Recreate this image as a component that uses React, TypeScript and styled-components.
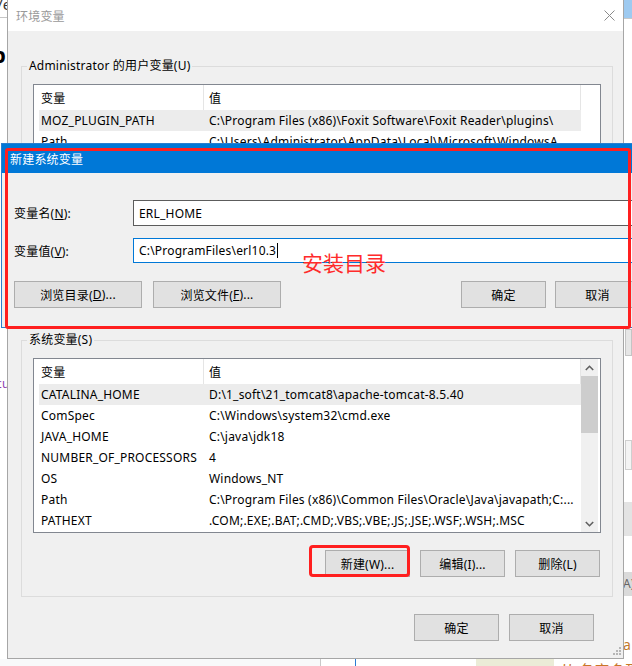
import React from "react";
import styled, { createGlobalStyle } from "styled-components";

const GlobalStyle = createGlobalStyle`
  html, body { margin: 0; padding: 0; background: #f8f9fa; }
  body {
    font-family: "Noto Sans", "Noto Sans CJK SC", sans-serif;
    font-size: 12px;
    letter-spacing: 0.2px;
    color: #000;
    overflow: hidden;
  }
  * { box-sizing: border-box; }
`;

const Desktop = styled.div`
  position: relative;
  width: 632px;
  height: 666px;
  overflow: hidden;
  background: #f8f9fa;
`;

/* ---------- background windows ---------- */
const LeftBack = styled.div`
  position: absolute;
  left: 0;
  top: 0;
  width: 8px;
  height: 666px;
  background: #fff;
  display: flex;
  flex-direction: column;
  overflow: hidden;
`;

const BackText = styled.div<{ $color: string; $size: number; $top: number; $left: number; $bold?: boolean }>`
  margin-top: ${(p) => p.$top}px;
  margin-left: ${(p) => p.$left}px;
  color: ${(p) => p.$color};
  font-size: ${(p) => p.$size}px;
  font-weight: ${(p) => (p.$bold ? 700 : 400)};
  line-height: ${(p) => p.$size + 2}px;
  white-space: nowrap;
`;

const BackRule = styled.div<{ $top: number; $color: string }>`
  margin-top: ${(p) => p.$top}px;
  height: 1px;
  background: ${(p) => p.$color};
  flex-shrink: 0;
`;

const RightBack = styled.div`
  position: absolute;
  left: 623px;
  top: 0;
  width: 9px;
  height: 666px;
  background: #fff;
  display: flex;
  flex-direction: column;
  overflow: hidden;
`;

const BackBlock = styled.div<{ $top: number; $h: number; $bg: string; $border?: string; $left?: number }>`
  margin-top: ${(p) => p.$top}px;
  margin-left: ${(p) => p.$left ?? 0}px;
  height: ${(p) => p.$h}px;
  background: ${(p) => p.$bg};
  border: ${(p) => p.$border ?? "none"};
  flex-shrink: 0;
  color: #666;
  font-size: 12px;
  line-height: ${(p) => p.$h}px;
  white-space: nowrap;
  overflow: hidden;
`;

const BackLetter = styled.span`
  color: #c47a2a;
  font-size: 14px;
`;

const BottomBack = styled.div`
  position: absolute;
  left: 0;
  top: 659px;
  width: 632px;
  height: 7px;
  display: flex;
  overflow: hidden;
`;

const BottomSeg = styled.div<{ $w: number; $bg: string }>`
  width: ${(p) => p.$w}px;
  background: ${(p) => p.$bg};
  flex-shrink: 0;
  overflow: hidden;
`;

const BottomGlyphs = styled.div`
  flex: 1;
  background: #fff;
  color: #c9772a;
  font-size: 15px;
  line-height: 15px;
  padding: 4px 0 0 6px;
  white-space: nowrap;
  overflow: hidden;
`;

/* ---------- main window ---------- */
const MainWindow = styled.div`
  position: absolute;
  left: 7px;
  top: 0;
  width: 617px;
  height: 659px;
  border: 1px solid #a6a6a6;
  border-top: none;
  background: #f0f0f0;
  display: flex;
  flex-direction: column;
`;

const MainTitleBar = styled.div`
  height: 31px;
  flex-shrink: 0;
  background: #fff;
  display: flex;
  align-items: center;
  justify-content: space-between;
  padding: 0 8px 0 8px;
`;

const InactiveTitle = styled.span`
  color: #999;
  font-size: 12px;
`;

const MainBody = styled.div`
  flex: 1;
  display: flex;
  flex-direction: column;
  padding: 25px 10px 0 13px;
`;

const Group = styled.fieldset<{ $gap?: number }>`
  margin: ${(p) => p.$gap ?? 0}px 0 0 0;
  padding: 8px 11px 19px 11px;
  border: 1px solid #dcdcdc;
  min-width: 0;
  display: flex;
  flex-direction: column;
`;

const GroupLabel = styled.legend`
  margin-left: -6px;
  padding: 0 2px;
  line-height: 20px;
  font-size: 12px;
`;

const ButtonRow = styled.div<{ $gap: number; $top: number; $right: number }>`
  display: flex;
  justify-content: flex-end;
  gap: ${(p) => p.$gap}px;
  margin-top: ${(p) => p.$top}px;
  padding-right: ${(p) => p.$right}px;
`;

const WinButton = styled.div<{ $w: number }>`
  width: ${(p) => p.$w}px;
  height: 27px;
  flex-shrink: 0;
  border: 1px solid #adadad;
  background: #e1e1e1;
  display: flex;
  align-items: center;
  justify-content: center;
  font-size: 12px;
  white-space: nowrap;
`;

const Grip = styled.svg`
  position: absolute;
  right: 2px;
  bottom: 3px;
`;

/* ---------- list view ---------- */
const ListFrame = styled.div<{ $h: number }>`
  height: ${(p) => p.$h}px;
  flex-shrink: 0;
  border: 1px solid #828790;
  background: #fff;
  display: flex;
  padding: 0 1px 0 5px;
  overflow: hidden;
`;

const ListTable = styled.div`
  width: 542px;
  flex-shrink: 0;
  display: flex;
  flex-direction: column;
`;

const HeaderRow = styled.div`
  height: 25px;
  display: flex;
  flex-shrink: 0;
`;

const Cell = styled.div<{ $w: number; $pad: number; $sep?: boolean }>`
  width: ${(p) => p.$w}px;
  flex-shrink: 0;
  padding-left: ${(p) => p.$pad}px;
  border-right: ${(p) => (p.$sep ? "1px solid #e5e5e5" : "none")};
  white-space: nowrap;
  overflow: hidden;
  display: flex;
  align-items: center;
`;

const DataRow = styled.div<{ $selected?: boolean }>`
  height: 21px;
  display: flex;
  flex-shrink: 0;
  background: ${(p) => (p.$selected ? "#ececec" : "transparent")};
`;

const DataCell = styled.div<{ $w: number; $pad: number }>`
  width: ${(p) => p.$w}px;
  flex-shrink: 0;
  padding-left: ${(p) => p.$pad}px;
  line-height: 21px;
  white-space: nowrap;
  overflow: hidden;
`;

const ScrollBar = styled.div`
  width: 17px;
  flex-shrink: 0;
  background: #f0f0f0;
  display: flex;
  flex-direction: column;
`;

const ScrollArrow = styled.div`
  height: 17px;
  flex-shrink: 0;
  display: flex;
  align-items: center;
  justify-content: center;
`;

const ScrollThumb = styled.div`
  height: 57px;
  flex-shrink: 0;
  background: #cdcdcd;
`;

const ScrollTrack = styled.div`
  flex: 1;
`;

/* ---------- new variable dialog ---------- */
const NewVarDialog = styled.div`
  position: absolute;
  left: 1px;
  top: 143px;
  width: 653px;
  height: 185px;
  border: 1px solid #2b7fcf;
  background: #f0f0f0;
  display: flex;
  flex-direction: column;
`;

const ActiveTitleBar = styled.div`
  height: 29px;
  flex-shrink: 0;
  background: #0078d7;
  color: #fff;
  display: flex;
  align-items: center;
  padding-left: 8px;
  font-size: 12px;
`;

const DialogBody = styled.div`
  flex: 1;
  display: flex;
  flex-direction: column;
  padding: 27px 13px 0 12px;
`;

const FormRow = styled.div<{ $top: number }>`
  display: flex;
  align-items: center;
  margin-top: ${(p) => p.$top}px;
`;

const FieldLabel = styled.div`
  width: 119px;
  flex-shrink: 0;
  font-size: 12px;
`;

const TextBox = styled.div<{ $focused?: boolean; $h: number }>`
  flex: 1;
  height: ${(p) => p.$h}px;
  border: 1px solid ${(p) => (p.$focused ? "#0078d7" : "#5c5c5c")};
  background: #fff;
  display: flex;
  align-items: center;
  padding-left: 5px;
  font-size: 12px;
  white-space: nowrap;
`;

const Caret = styled.span`
  display: inline-block;
  width: 1px;
  height: 15px;
  background: #000;
  margin-left: 1px;
`;

const DialogButtons = styled.div`
  display: flex;
  align-items: center;
  margin-top: 18px;
  gap: 11px;
`;

const Spacer = styled.div`
  flex: 1;
`;

const RightPair = styled.div`
  display: flex;
  gap: 9px;
`;

/* ---------- annotations ---------- */
const RedFrame = styled.div<{ $x: number; $y: number; $w: number; $h: number; $t: number; $r: number }>`
  position: absolute;
  left: ${(p) => p.$x}px;
  top: ${(p) => p.$y}px;
  width: ${(p) => p.$w}px;
  height: ${(p) => p.$h}px;
  border: ${(p) => p.$t}px solid #ff1f1f;
  border-radius: ${(p) => p.$r}px;
  pointer-events: none;
`;

const RedNote = styled.div`
  position: absolute;
  left: 302px;
  top: 248px;
  color: #ff2b2b;
  font-family: "Noto Sans CJK SC", sans-serif;
  font-size: 21px;
  letter-spacing: 0;
  line-height: 28px;
  white-space: nowrap;
`;

/* ---------- icons ---------- */
const CloseIcon = () => (
  <svg width="11" height="11" viewBox="0 0 11 11">
    <path d="M0.5 0.5 L10.5 10.5 M10.5 0.5 L0.5 10.5" stroke="#8a8a8a" strokeWidth="1" fill="none" />
  </svg>
);

const Chevron = ({ up }: { up: boolean }) => (
  <svg width="9" height="6" viewBox="0 0 9 6">
    <polyline
      points={up ? "0.8,5 4.5,1.3 8.2,5" : "0.8,1 4.5,4.7 8.2,1"}
      stroke="#606060"
      strokeWidth="1.6"
      fill="none"
    />
  </svg>
);

/* ---------- data ---------- */
type Row = [string, string];

const userRows: Row[] = [
  ["MOZ_PLUGIN_PATH", "C:\\Program Files (x86)\\Foxit Software\\Foxit Reader\\plugins\\"],
  ["Path", "C:\\Users\\Administrator\\AppData\\Local\\Microsoft\\WindowsA..."],
  ["TEMP", "%USERPROFILE%\\AppData\\Local\\Temp"],
  ["TMP", "%USERPROFILE%\\AppData\\Local\\Temp"],
];

const systemRows: Row[] = [
  ["CATALINA_HOME", "D:\\1_soft\\21_tomcat8\\apache-tomcat-8.5.40"],
  ["ComSpec", "C:\\Windows\\system32\\cmd.exe"],
  ["JAVA_HOME", "C:\\java\\jdk18"],
  ["NUMBER_OF_PROCESSORS", "4"],
  ["OS", "Windows_NT"],
  ["Path", "C:\\Program Files (x86)\\Common Files\\Oracle\\Java\\javapath;C:..."],
  ["PATHEXT", ".COM;.EXE;.BAT;.CMD;.VBS;.VBE;.JS;.JSE;.WSF;.WSH;.MSC"],
];

const ListView = ({ rows, height, scroll }: { rows: Row[]; height: number; scroll: boolean }) => (
  <ListFrame $h={height}>
    <ListTable>
      <HeaderRow>
        <Cell $w={165} $pad={2} $sep>
          变量
        </Cell>
        <Cell $w={377} $pad={5} $sep>
          值
        </Cell>
      </HeaderRow>
      {rows.map((r, i) => (
        <DataRow key={r[0]} $selected={i === 0}>
          <DataCell $w={165} $pad={2}>
            {r[0]}
          </DataCell>
          <DataCell $w={377} $pad={5}>
            {r[1]}
          </DataCell>
        </DataRow>
      ))}
    </ListTable>
    {scroll && (
      <ScrollBar>
        <ScrollArrow>
          <Chevron up />
        </ScrollArrow>
        <ScrollThumb />
        <ScrollTrack />
        <ScrollArrow>
          <Chevron up={false} />
        </ScrollArrow>
      </ScrollBar>
    )}
  </ListFrame>
);

export default function App() {
  return (
    <>
      <GlobalStyle />
      <Desktop>
        <LeftBack>
          <BackText $color="#333" $size={15} $top={-4} $left={-3}>
            /e
          </BackText>
          <BackRule $top={4} $color="#c6c6c6" />
          <BackText $color="#000" $size={22} $top={24} $left={-8} $bold>
            p
          </BackText>
          <BackText $color="#8c3fb0" $size={12} $top={311} $left={-4}>
            cu
          </BackText>
        </LeftBack>

        <RightBack>
          <BackBlock $top={0} $h={18} $bg="#9ecaf0" />
          <BackBlock $top={0} $h={1} $bg="#c8c8c8" />
          <BackBlock $top={310} $h={27} $bg="#e6e6e6" $left={2} $border="1px solid #c4c4c4" />
          <BackBlock $top={84} $h={30} $bg="#f4f4f4" $left={2} $border="1px solid #cfcfcf" />
          <BackBlock $top={32} $h={34} $bg="#e3e3e3" />
          <BackBlock $top={36} $h={24} $bg="#dadada">
            A)
          </BackBlock>
          <BackBlock $top={40} $h={18} $bg="#fff">
            <BackLetter>a</BackLetter>
          </BackBlock>
        </RightBack>

        <BottomBack>
          <BottomSeg $w={320} $bg="#f8f9fa" />
          <BottomSeg $w={1} $bg="#c9c9c9" />
          <BottomSeg $w={34} $bg="#fff" />
          <BottomSeg $w={1} $bg="#2b7cd3" />
          <BottomSeg $w={120} $bg="#fff" />
          <BottomSeg $w={78} $bg="#ebecd7" />
          <BottomGlyphs>从 各家多到</BottomGlyphs>
        </BottomBack>

        <MainWindow>
          <MainTitleBar>
            <InactiveTitle>环境变量</InactiveTitle>
            <CloseIcon />
          </MainTitleBar>
          <MainBody>
            <Group>
              <GroupLabel>Administrator 的用户变量(U)</GroupLabel>
              <ListView rows={userRows} height={175} scroll={false} />
              <ButtonRow $gap={10} $top={17} $right={1}>
                <WinButton $w={85}>新建(N)...</WinButton>
                <WinButton $w={85}>编辑(E)...</WinButton>
                <WinButton $w={85}>删除(D)</WinButton>
              </ButtonRow>
            </Group>
            <Group $gap={7}>
              <GroupLabel>系统变量(S)</GroupLabel>
              <ListView rows={systemRows} height={175} scroll />
              <ButtonRow $gap={10} $top={17} $right={1}>
                <WinButton $w={85}>新建(W)...</WinButton>
                <WinButton $w={85}>编辑(I)...</WinButton>
                <WinButton $w={85}>删除(L)</WinButton>
              </ButtonRow>
            </Group>
            <ButtonRow $gap={10} $top={17} $right={19}>
              <WinButton $w={85}>确定</WinButton>
              <WinButton $w={85}>取消</WinButton>
            </ButtonRow>
          </MainBody>
          <Grip width="9" height="9" viewBox="0 0 9 9">
            <rect x="7" y="1" width="2" height="2" fill="#b5b5b5" />
            <rect x="4" y="4" width="2" height="2" fill="#b5b5b5" />
            <rect x="7" y="4" width="2" height="2" fill="#b5b5b5" />
            <rect x="1" y="7" width="2" height="2" fill="#b5b5b5" />
            <rect x="4" y="7" width="2" height="2" fill="#b5b5b5" />
            <rect x="7" y="7" width="2" height="2" fill="#b5b5b5" />
          </Grip>
        </MainWindow>

        <NewVarDialog>
          <ActiveTitleBar>新建系统变量</ActiveTitleBar>
          <DialogBody>
            <FormRow $top={0}>
              <FieldLabel>
                变量名(<u>N</u>):
              </FieldLabel>
              <TextBox $h={26}>ERL_HOME</TextBox>
            </FormRow>
            <FormRow $top={12}>
              <FieldLabel>
                变量值(<u>V</u>):
              </FieldLabel>
              <TextBox $h={25} $focused>
                C:\ProgramFiles\erl10.3
                <Caret />
              </TextBox>
            </FormRow>
            <DialogButtons>
              <WinButton $w={128}>
                浏览目录(<u>D</u>)...
              </WinButton>
              <WinButton $w={128}>
                浏览文件(<u>F</u>)...
              </WinButton>
              <Spacer />
              <RightPair>
                <WinButton $w={85}>确定</WinButton>
                <WinButton $w={85}>取消</WinButton>
              </RightPair>
            </DialogButtons>
          </DialogBody>
        </NewVarDialog>

        <RedFrame $x={5} $y={148} $w={626} $h={181} $t={3} $r={3} />
        <RedNote>安装目录</RedNote>
        <RedFrame $x={309} $y={545} $w={101} $h={32} $t={3} $r={4} />
      </Desktop>
    </>
  );
}
